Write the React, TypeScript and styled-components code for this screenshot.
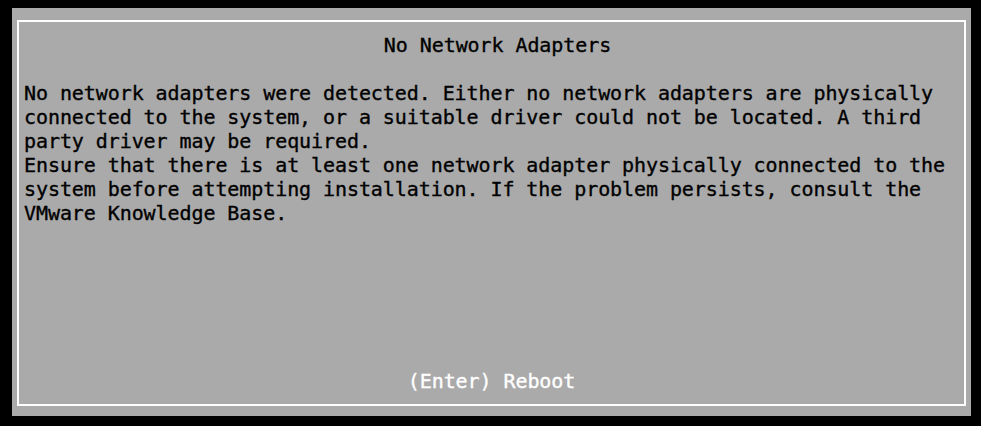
import React from "react";
import styled, { createGlobalStyle } from "styled-components";

const GlobalStyle = createGlobalStyle`
  html, body {
    margin: 0;
    padding: 0;
    background: #000;
  }
  body {
    font-family: "DejaVu Sans Mono", "Liberation Mono", monospace;
  }
`;

const Screen = styled.div`
  width: 981px;
  height: 426px;
  padding: 8px 10px 10px 12px;
  box-sizing: border-box;
  background: #000;
`;

const Panel = styled.div`
  width: 959px;
  height: 408px;
  box-sizing: border-box;
  padding: 12px 5px 10px 5px;
  background: #aaaaaa;
`;

const Frame = styled.div`
  height: 100%;
  box-sizing: border-box;
  border: 2px solid #ffffff;
  padding: 11px 5px;
  display: flex;
  flex-direction: column;
  font-size: 20px;
  line-height: 24px;
  letter-spacing: -0.08px;
  color: #000;
  -webkit-text-stroke: 0.35px currentColor;
  white-space: pre-wrap;
`;

const Title = styled.div`
  text-align: center;
  padding-left: 12px;
  margin-bottom: 24px;
`;

const Message = styled.p`
  margin: 0;
`;

const Footer = styled.div`
  margin-top: auto;
  text-align: center;
  color: #ffffff;
`;

const App = () => {
  return (
    <>
      <GlobalStyle />
      <Screen>
        <Panel>
          <Frame>
            <Title>No Network Adapters</Title>
            <Message>
              No network adapters were detected. Either no network adapters are physically connected to the
              system, or a suitable driver could not be located. A third party driver may be required.
            </Message>
            <Message>
              Ensure that there is at least one network adapter physically connected to the system before
              attempting installation. If the problem persists, consult the VMware Knowledge Base.
            </Message>
            <Footer>(Enter) Reboot</Footer>
          </Frame>
        </Panel>
      </Screen>
    </>
  );
};

export default App;
